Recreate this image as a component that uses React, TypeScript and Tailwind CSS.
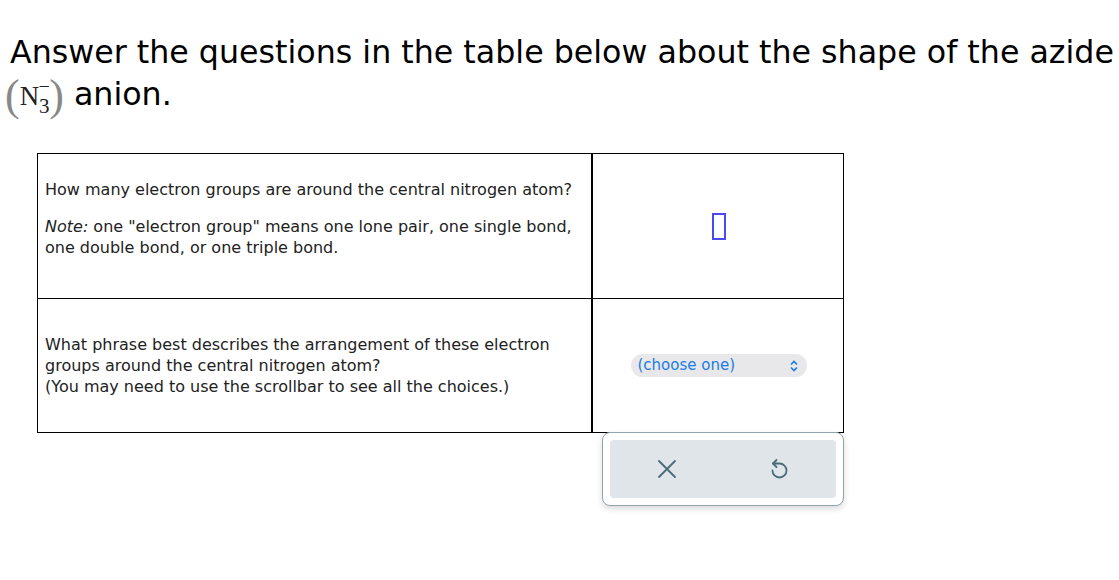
function ChooseSelect() {
  return (
    <div className="flex h-[23px] w-[176px] items-center justify-between rounded-full bg-[#e8e8ea] pr-[8px] pl-[7px] text-[15px] text-[#1b7ce8]">
      <span>(choose one)</span>
      <svg width="10" height="12" viewBox="0 0 10 12" fill="none" stroke="#1b7ce8" strokeWidth="1.6">
        <path d="M2 4.5 L5 1.5 L8 4.5" />
        <path d="M2 7.5 L5 10.5 L8 7.5" />
      </svg>
    </div>
  );
}

// azide formula: (N3-) typeset like the math renderer
function Azide() {
  return (
    <span className="inline-flex h-[42px] items-center align-middle font-['Liberation_Serif',serif] text-[#222]">
      <span className="text-[44px] leading-[42px] text-[#888]">(</span>
      <span className="text-[27px] leading-none">N</span>
      <span className="flex w-[10px] flex-col items-center">
        <span className="-translate-y-[2px] text-[20px] leading-[12px]">−</span>
        <span className="translate-y-[4px] text-[21px] leading-[16px]">3</span>
      </span>
      <span className="text-[44px] leading-[42px] text-[#888]">)</span>
    </span>
  );
}

export default function App() {
  return (
    <div className="h-[580px] w-[1119px] bg-white font-['DejaVu_Sans',sans-serif] text-[#222]">
      <h1 className="pt-[31px] pl-[10px] text-[31.7px] leading-[42px] whitespace-nowrap text-black">
        Answer the questions in the table below about the shape of the azide
        <br />
        <span className="-ml-[5px]">
          <Azide />
        </span>{' '}
        anion.
      </h1>

      <div className="mt-[36px] ml-[37px] w-[807px]">
        <div className="grid grid-cols-[554px_252px] border border-black">
          <div className="h-[145px] border-r border-b border-black px-[7px] pt-[25px] text-[16px] leading-[21px]">
            <p>How many electron groups are around the central nitrogen atom?</p>
            <p className="mt-[16px]">
              <i>Note:</i> one "electron group" means one lone pair, one single bond, one double bond, or one triple
              bond.
            </p>
          </div>
          <div className="flex h-[145px] items-center justify-center border-b border-l border-black">
            <div className="h-[27px] w-[14px] border-2 border-[#4a4af5]" />
          </div>
          <div className="h-[133px] border-r border-black px-[7px] pt-[35px] text-[16px] leading-[21px]">
            <p>What phrase best describes the arrangement of these electron groups around the central nitrogen atom?</p>
            <p>(You may need to use the scrollbar to see all the choices.)</p>
          </div>
          <div className="flex h-[133px] items-center justify-center border-l border-black">
            <ChooseSelect />
          </div>
        </div>
        <div className="-mt-px ml-[565px] w-[242px] rounded-[8px] border border-[#8fa5ad] bg-white p-[7px] shadow-[0_3px_6px_rgba(0,0,0,0.15)]">
          <div className="flex h-[58px] items-center justify-around rounded-[4px] bg-[#dfe5e8]">
            <svg width="40" height="40" viewBox="0 0 40 40" fill="none" stroke="#4b6b77" strokeWidth="1.8" strokeLinecap="round">
              <path d="M12 12 L28 28 M28 12 L12 28" />
            </svg>
            <svg
              width="40"
              height="40"
              viewBox="0 0 40 40"
              fill="none"
              stroke="#4b6b77"
              strokeWidth="1.8"
              strokeLinecap="round"
              strokeLinejoin="round"
            >
              <path d="M13 14.5 H19.5 A7 7 0 1 1 12.5 21.5" />
              <path d="M16.5 11 L13 14.5 L16.5 18" />
            </svg>
          </div>
        </div>
      </div>
    </div>
  );
}
